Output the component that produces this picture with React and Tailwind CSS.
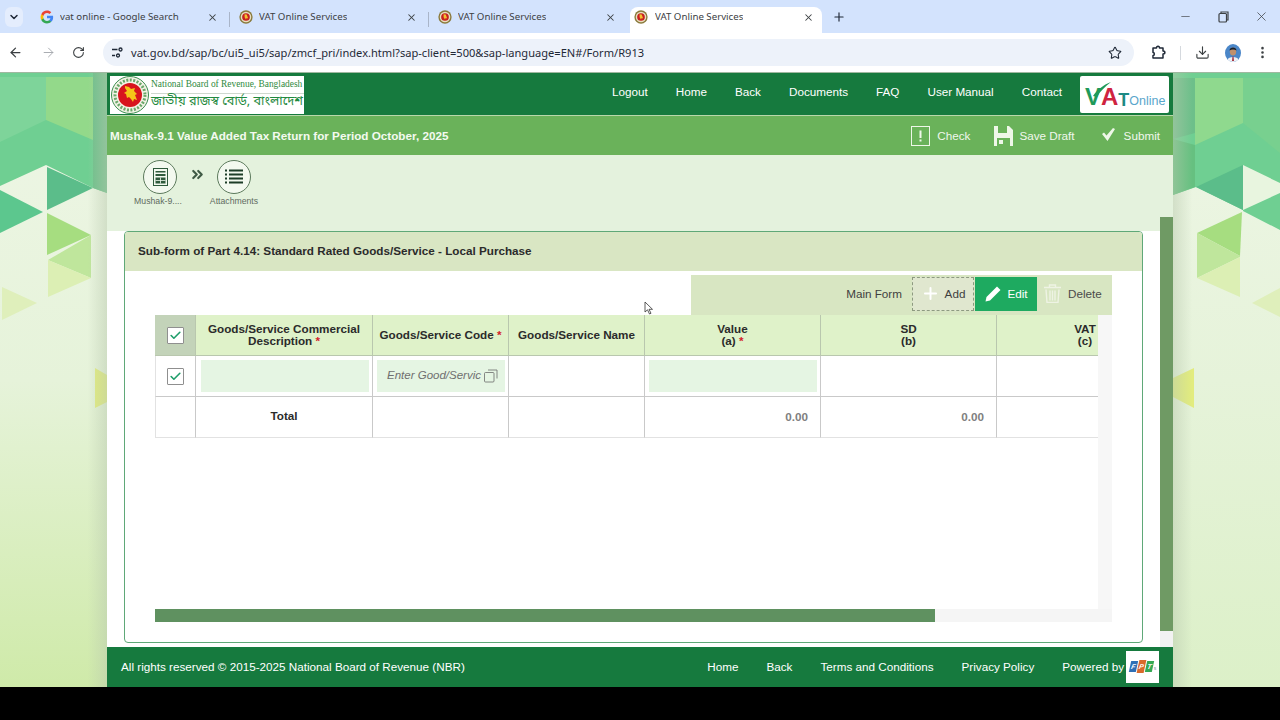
import { ArrowLeft, ArrowRight, RotateCw, Star, Download, MoreVertical, X, Plus, Minus, ChevronDown, ChevronsRight, Check } from 'lucide-react';

const sans = { fontFamily: '"Liberation Sans", Arial, sans-serif' };

function GoogleIcon() {
  return (
    <svg width="14" height="14" viewBox="0 0 48 48" className="shrink-0">
      <path fill="#4285F4" d="M45 24.5c0-1.6-.1-3.100-.4-4.500H24v8.600h11.800c-.5 2.700-2 5-4.400 6.600v5.500h7.100C42.700 36.800 45 31.200 45 24.500z" />
      <path fill="#34A853" d="M24 46c5.900 0 10.900-2 14.500-5.300l-7.100-5.500c-2 1.300-4.500 2.100-7.400 2.100-5.700 0-10.500-3.800-12.200-9H4.500v5.700C8.100 41.100 15.500 46 24 46z" />
      <path fill="#FBBC05" d="M11.800 28.300c-.9-2.700-.9-5.600 0-8.300v-5.700H4.500a22 22 0 0 0 0 19.700z" />
      <path fill="#EA4335" d="M24 10.700c3.200 0 6.100 1.100 8.400 3.300l6.300-6.300C34.900 4.100 29.900 2 24 2 15.500 2 8.100 6.900 4.500 14.300l7.300 5.700c1.700-5.200 6.500-9.300 12.200-9.300z" />
    </svg>
  );
}

function Favicon() {
  return (
    <svg width="14" height="14" viewBox="0 0 20 20" className="shrink-0">
      <circle cx="10" cy="10" r="9.500" fill="#8a7a3c" />
      <circle cx="10" cy="10" r="7.500" fill="#e8dfc0" />
      <circle cx="10" cy="10" r="5.500" fill="#c8201f" />
      <path d="M8 6l3 .5 1 2.500 1 3-2-.5-1 2-2-3z" fill="#f2c230" />
    </svg>
  );
}

function Tab({ icon, title, active, sep }) {
  return (
    <div className={`relative flex items-center h-[26px] ${active ? 'w-[192px] ml-[2px] bg-white rounded-t-lg' : 'w-[199px]'}`}>
      {sep && <div className="absolute left-[-1px] top-[5px] w-px h-[15px] bg-[#a9b5c9]" />}
      <div className={`flex items-center w-full ${active ? 'pl-[4px] pr-[8px]' : 'pl-[9px] pr-[12px]'} -mt-[5px]`}>
        {icon}
        <span className={`text-[9.7px] text-[#3c4043] truncate ${active ? 'ml-[7px]' : 'ml-[6px]'}`} style={{ fontFamily: '"Noto Sans", sans-serif' }}>{title}</span>
        <X size={11} strokeWidth={2.2} className="ml-auto text-[#3c4043]" />
      </div>
    </div>
  );
}

function ChromeBar() {
  return (
    <div className="shrink-0">
      <div className="h-[33px] bg-[#d3e3fd] flex items-end relative pl-[31px]">
        <div className="absolute left-[5px] top-[7px] w-[18px] h-[20px] rounded-md bg-[#e4edfd] flex items-center justify-center">
          <ChevronDown size={12} strokeWidth={3} className="text-[#1f2937]" />
        </div>
        <Tab icon={<GoogleIcon />} title="vat online - Google Search" />
        <Tab icon={<Favicon />} title="VAT Online Services" sep />
        <Tab icon={<Favicon />} title="VAT Online Services" sep />
        <Tab icon={<Favicon />} title="VAT Online Services" active />
        <Plus size={14} strokeWidth={2} className="text-[#1f2937] mb-[9px] ml-[10px]" />
        <div className="ml-auto flex items-center gap-[24px] mb-[9px] pr-[11px] text-[#3c4043]">
          <Minus size={13} strokeWidth={1.2} />
          <svg width="14" height="14" viewBox="0 0 14 14" fill="none" stroke="currentColor" strokeWidth="1.200"><rect x="3" y="3.500" width="7.500" height="8.500" rx="1" /><path d="M5 3.500V2h7v8h-1.500" /></svg>
          <X size={15} strokeWidth={1.2} />
        </div>
      </div>
      <div className="h-[39px] bg-white flex items-center relative text-[#3c4043]">
        <ArrowLeft size={15} strokeWidth={2} className="ml-[8px]" />
        <ArrowRight size={15} strokeWidth={1.500} className="ml-[18px] text-[#a4a8ad]" />
        <RotateCw size={13} strokeWidth={2} className="ml-[16px]" />
        <div className="ml-[18px] w-[1031px] h-[27px] rounded-full bg-[#edf2fa] flex items-center pl-[8px] pr-[12px]">
          <svg width="13" height="13" viewBox="0 0 13 13" fill="none" stroke="#1f2937" strokeWidth="1.300" className="shrink-0">
            <path d="M1 3.500h5.500M1 9.500h3" /><circle cx="9.500" cy="3.500" r="1.500" /><circle cx="7" cy="9.500" r="1.500" />
          </svg>
          <span className="ml-[7px] text-[11.1px] text-[#1f2937] whitespace-nowrap translate-y-px" style={{ fontFamily: '"Noto Sans", sans-serif' }}>vat.gov.bd/sap/bc/ui5_ui5/sap/zmcf_pri/index.html?sap-client=500&amp;sap-language=EN#/Form/R913</span>
          <Star size={14} strokeWidth={1.800} className="ml-auto text-[#1f2937]" />
        </div>
        <svg width="15" height="15" viewBox="0 0 15 15" fill="none" stroke="#1f2937" strokeWidth="1.500" strokeLinejoin="round" className="ml-[17px]">
          <path d="M2 3h3.500c0-2.500 3-2.500 3 0H12v3c2.500 0 2.500 3 0 3v4H2v-2.500c1.800 0 1.800-3 0-3z" />
        </svg>
        <div className="ml-[14px] w-px h-[14px] bg-[#d5d9de]" />
        <Download size={15} strokeWidth={1.800} className="ml-[14px]" />
        <svg width="16" height="18" viewBox="0 0 16 18" className="ml-[15px]">
          <ellipse cx="8" cy="9" rx="8" ry="9" fill="#4a86c8" />
          <ellipse cx="8" cy="7.500" rx="3.200" ry="4" fill="#c0906c" />
          <path d="M4.500 6.500c0-4 7-4 7 0-2-1.500-5-1.500-7 0z" fill="#15202e" />
          <path d="M2.500 15.500c1-3.500 10-3.500 11 0a8 9 0 0 1-11 0z" fill="#eef0f4" />
          <path d="M7.500 12.500h1l.5 4.500H7z" fill="#a22c3a" />
        </svg>
        <MoreVertical size={15} strokeWidth={2.200} className="ml-[14px]" />
      </div>
    </div>
  );
}

function SidePattern({ side }) {
  const left = side === 'left';
  return (
    <svg width="107" height="614" viewBox="0 0 107 614" className="shrink-0">
      <defs>
        <linearGradient id={`base-${side}`} x1="0" y1="0" x2="0" y2="1">
          <stop offset="0" stopColor="#eef6e6" />
          <stop offset="0.5" stopColor="#e6f3da" />
          <stop offset="1" stopColor={left ? '#cfeaa9' : '#dcf0c8'} />
        </linearGradient>
        <linearGradient id={`shade-${side}`} x1={left ? '1' : '0'} y1="0" x2={left ? '0' : '1'} y2="0">
          <stop offset="0" stopColor="#b9c9ae" stopOpacity="0.5" />
          <stop offset="0.18" stopColor="#b9c9ae" stopOpacity="0" />
        </linearGradient>
      </defs>
      <rect width="107" height="614" fill={`url(#base-${side})`} />
      {left ? (
        <g>
          <polygon points="0,0 107,0 107,120 93,115 46,92 0,113" fill="#6fcf92" />
          <polygon points="0,4 46,4 46,47 0,69" fill="#7ed49a" />
          <polygon points="46,4 93,4 93,67 46,47" fill="#93d98a" />
          <polygon points="93,0 107,0 107,120 93,115" fill="#6dbf8a" />
          <polygon points="47,94 93,115 47,137" fill="#5bbd8a" />
          <polygon points="0,117 43,139 0,160" fill="#5cc78e" />
          <polygon points="47,140 91,162 47,182" fill="#a6dd80" />
          <polygon points="48,187 91,162 91,205" fill="#bfe69c" />
          <polygon points="48,187 91,205 48,224" fill="#dcefb4" />
          <polygon points="2,214 37,230 2,247" fill="#dfefbb" />
          <polygon points="95,295 107,302 107,329 95,335" fill="#e2ec7e" />
        </g>
      ) : (
        <g>
          <polygon points="0,0 107,0 107,157 70,138 70,137 23,114 0,122" fill="#6fcf92" />
          <polygon points="0,5 22,5 22,60 0,66" fill="#6dbf8a" />
          <polygon points="22,5 70,5 70,50 22,72" fill="#8fd98e" />
          <polygon points="70,5 107,5 107,80 70,50" fill="#78d08f" />
          <polygon points="0,66 22,72 22,114 0,122" fill="#66c080" />
          <polygon points="23,114 70,92 70,137" fill="#5bbd8a" />
          <polygon points="70,92 107,110 107,120 70,137" fill="#e8f5df" />
          <polygon points="24,160 69,139 67,183" fill="#a6dd80" />
          <polygon points="24,160 67,183 67,184 24,205" fill="#bfe69c" />
          <polygon points="24,205 67,184 67,224" fill="#dcefb4" />
          <polygon points="79,230 107,215 107,244" fill="#dfefbb" />
          <polygon points="0,305 21,295 21,335 0,324" fill="#e2ec7e" />
        </g>
      )}
      <rect width="107" height="614" fill={`url(#shade-${side})`} />
    </svg>
  );
}

function Emblem() {
  return (
    <svg width="38" height="38" viewBox="0 0 38 38" className="shrink-0">
      <circle cx="19" cy="19" r="18.500" fill="#f3f3e6" stroke="#3c8f50" strokeWidth="1" />
      <circle cx="19" cy="19" r="15" fill="none" stroke="#6aa86a" strokeWidth="3" strokeDasharray="2 1.500" />
      <circle cx="19" cy="19" r="12" fill="#d8141e" />
      <path d="M14 10l4 1 2 2 4-1-1 3 3 3-2 1 2 5-3-1-1 3-2-3-2-2-2 1-1-4-2-1 3-2-2-3z" fill="#f5c518" />
    </svg>
  );
}

function LogoBox() {
  return (
    <div className="w-[194px] h-[38px] bg-white flex items-center pl-[1px] overflow-hidden">
      <Emblem />
      <div className="ml-[2px] w-[153px] flex flex-col leading-none">
        <div className="border-b border-[#cfd8cf] pb-[3px]">
          <span className="block text-[9.4px] text-[#2f8a3e] whitespace-nowrap scale-y-[1.2] origin-bottom" style={{ fontFamily: '"Liberation Serif", serif' }}>National Board of Revenue, Bangladesh</span>
        </div>
        <span className="text-[12.7px] leading-[16px] text-[#1f8a3e] whitespace-nowrap" style={{ fontFamily: '"Noto Sans Bengali", "Noto Sans", sans-serif' }}>জাতীয় রাজস্ব বোর্ড, বাংলাদেশ</span>
      </div>
    </div>
  );
}

function VatLogo() {
  return (
    <div className="relative w-[89px] h-[37px] bg-white rounded-[2px] flex items-end pb-[4px] pl-[5px] whitespace-nowrap" style={sans}>
      <span className="text-[24px] font-bold text-[#1f9a5a] leading-none">V</span>
      <span className="text-[24px] font-bold text-[#cf2340] leading-none">A</span>
      <span className="text-[18px] font-bold text-[#1c8a84] leading-none">T</span>
      <span className="text-[12.5px] text-[#5aa6cc] leading-none mb-[2px]">Online</span>
      <svg width="20" height="16" viewBox="0 0 20 16" className="absolute left-[12px] top-[5px]">
        <path d="M1 15C5 9 11 4 19 1 13 6 8 10 5 16z" fill="#1f9a5a" />
      </svg>
    </div>
  );
}

function TopNav() {
  const links = ['Logout', 'Home', 'Back', 'Documents', 'FAQ', 'User Manual', 'Contact'];
  return (
    <div className="h-[43px] bg-[#167a3e] flex items-start pt-[3px] pl-[3px] pr-[4px] border-b border-[#b9d8ab] shrink-0">
      <LogoBox />
      <div className="ml-auto flex items-center gap-[28px] pr-[18px] h-[31px] text-[11.7px] text-white">
        {links.map((l) => <span key={l}>{l}</span>)}
      </div>
      <VatLogo />
    </div>
  );
}

function ActionBar() {
  return (
    <div className="h-[39px] bg-[#6ab25a] flex items-center pl-[3px] shrink-0 text-white">
      <span className="text-[11.7px] font-bold text-[#f4faf0]">Mushak-9.1 Value Added Tax Return for Period October, 2025</span>
      <div className="ml-auto flex items-center pr-[13px] text-[11.7px] text-[#f0f7ec]">
        <svg width="19" height="20" viewBox="0 0 19 20" fill="none"><rect x="0.500" y="0.500" width="18" height="19" stroke="#eef7e8" /><rect x="8.500" y="4.500" width="2" height="7.500" fill="#eef7e8" /><rect x="8.500" y="13.500" width="2" height="2" fill="#eef7e8" /></svg>
        <span className="ml-[7px]">Check</span>
        <svg width="19" height="20" viewBox="0 0 19 20" className="ml-[24px]"><path d="M0 0h15l4 4v16H0z" fill="#eef7e8" /><rect x="4" y="0" width="9" height="7" fill="#6ab25a" /><rect x="3" y="12" width="13" height="8" fill="#6ab25a" /><rect x="5" y="14" width="4" height="4" fill="#eef7e8" /></svg>
        <span className="ml-[6px]">Save Draft</span>
        <svg width="13" height="13" viewBox="0 0 13 13" fill="#eef7e8" className="ml-[27px] -mt-[3px]"><path d="M0 6l2-1.500 2.500 3L11 0l2 1-7.500 12z" /></svg>
        <span className="ml-[9px]">Submit</span>
      </div>
    </div>
  );
}

function StepCircle({ children, label, labelClass = '' }) {
  return (
    <div className="flex flex-col items-center w-[50px]">
      <div className="w-[34px] h-[34px] rounded-full bg-[#f3f9ef] border border-[#5c7a5c] flex items-center justify-center">{children}</div>
      <span className={`mt-[3px] text-[8.7px] text-[#5f6b5f] whitespace-nowrap leading-none ${labelClass}`}>{label}</span>
    </div>
  );
}

function Steps() {
  return (
    <div className="h-[76px] bg-[#e4f2dd] flex items-start pt-[5px] pl-[28px] shrink-0">
      <StepCircle label="Mushak-9...." labelClass="-translate-x-[2px]">
        <svg width="15" height="18" viewBox="0 0 15 18"><rect x="0.500" y="0.500" width="14" height="17" fill="none" stroke="#2f5a3c" /><rect x="2.500" y="3" width="10" height="1.500" fill="#2f5a3c" /><rect x="2.500" y="6" width="10" height="2" fill="#2f5a3c" /><rect x="2.500" y="9.500" width="10" height="6" fill="#2f5a3c" /><path d="M2.500 12.500h10M7.500 9.500v6" stroke="#f3f9ef" strokeWidth="0.800" /></svg>
      </StepCircle>
      <ChevronsRight size={17} strokeWidth={3} className="text-[#3f5a45] mt-[6px] ml-[4px] mr-[3px]" />
      <StepCircle label="Attachments">
        <svg width="18" height="18" viewBox="0 0 18 18" fill="#1d3d28"><path d="M0 1.500h2v2H0zM0 5.500h2v2H0zM0 9.500h2v2H0zM0 13.500h2v2H0zM4 1.500h14v2H4zM4 5.500h14v2H4zM4 9.500h14v2H4zM4 13.500h14v2H4z" /></svg>
      </StepCircle>
    </div>
  );
}

function Req() {
  return <span className="text-[#d4242c]"> *</span>;
}

function Head({ children, className = '' }) {
  return (
    <div className={`bg-[#dff2c9] border-r border-[#b9c7ae] border-b flex items-center justify-center text-center text-[11.7px] leading-[12px] font-bold text-[#2b2b2b] ${className}`}>
      <div>{children}</div>
    </div>
  );
}

function Cell({ children, className = '' }) {
  return <div className={`border-r border-b border-[#c9c9c9] flex items-center ${className}`}>{children}</div>;
}

function CheckBox() {
  return (
    <div className="w-[17px] h-[17px] bg-white border border-[#8f8f8f] rounded-[1px] flex items-center justify-center">
      <Check size={13} strokeWidth={3} className="text-[#1e9e6a]" />
    </div>
  );
}

function CopyIcon() {
  return (
    <svg width="14" height="14" viewBox="0 0 14 14" fill="none" stroke="#6b6b6b" strokeWidth="0.800" className="shrink-0 ml-auto">
      <rect x="0.500" y="3.500" width="9.500" height="9.500" rx="1" /><path d="M4 1h9v8.500" />
    </svg>
  );
}

function FormTable() {
  return (
    <div className="w-[943px] overflow-hidden">
      <div className="grid w-[1018px] grid-cols-[41px_177px_136px_136px_176px_176px_176px] grid-rows-[41px_41px_41px]">
        <div className="bg-[#c3d3b9] border-b border-r border-[#b9c7ae] flex items-center justify-center"><CheckBox /></div>
        <Head>Goods/Service Commercial<br />Description<Req /></Head>
        <Head>Goods/Service Code<Req /></Head>
        <Head>Goods/Service Name</Head>
        <Head>Value<br />(a)<Req /></Head>
        <Head>SD<br />(b)</Head>
        <Head className="border-r-0">VAT<br />(c)</Head>

        <Cell className="justify-center border-l border-l-[#e2e2e2]"><CheckBox /></Cell>
        <Cell className="pl-[5px] pr-[3px]"><div className="w-full h-[32px] bg-[#e5f5e3]" /></Cell>
        <Cell className="pl-[4px] pr-[3px]">
          <div className="w-full h-[32px] bg-[#e5f5e3] flex items-center pl-[10px] pr-[7px]">
            <span className="text-[11.5px] italic text-[#6f6f6f] whitespace-nowrap" style={sans}>Enter Good/Servic</span>
            <CopyIcon />
          </div>
        </Cell>
        <Cell />
        <Cell className="pl-[4px] pr-[3px]"><div className="w-full h-[32px] bg-[#e5f5e3]" /></Cell>
        <Cell />
        <Cell className="border-r-0" />

        <Cell className="border-l border-l-[#e2e2e2] border-b-[#e2e2e2]" />
        <Cell className="justify-center text-[11.7px] font-bold text-[#2b2b2b] pb-[2px] border-b-[#e2e2e2]">Total</Cell>
        <Cell className="border-b-[#e2e2e2]" />
        <Cell className="border-b-[#e2e2e2]" />
        <Cell className="justify-end pr-[12px] text-[11.7px] font-bold text-[#808080] border-b-[#e2e2e2]">0.00</Cell>
        <Cell className="justify-end pr-[12px] text-[11.7px] font-bold text-[#808080] border-b-[#e2e2e2]">0.00</Cell>
        <Cell className="border-r-0 border-b-[#e2e2e2]" />
      </div>
    </div>
  );
}

function FormToolbar() {
  return (
    <div className="flex justify-end">
      <div className="w-[421px] h-[40px] bg-[#d8e6c2] flex items-center justify-end pb-[3px] text-[11.7px] text-[#3f3f3f]">
        <span>Main Form</span>
        <div className="ml-[10px] w-[62px] h-[34px] bg-[#e0e7cf] border border-dashed border-[#8d9a80] flex items-center justify-center gap-[5px]">
          <Plus size={19} strokeWidth={2.500} className="text-white" />
          <span>Add</span>
        </div>
        <div className="ml-px w-[62px] h-[34px] bg-[#1eaa60] flex items-center justify-center gap-[5px] text-white">
          <svg width="18" height="18" viewBox="0 0 18 18" fill="#fff"><path d="M13 1.500l3.500 3.500L6 15.500l-4.500 1 1-4.500z" /></svg>
          <span>Edit</span>
        </div>
        <div className="w-[75px] h-[34px] flex items-center pl-[7px] gap-[7px] text-[#4a4a4a]">
          <svg width="17" height="19" viewBox="0 0 17 19" fill="none" stroke="#eef3e4" strokeWidth="1.400"><path d="M0 3.500h17M5.500 3V1h6v2M2 5.500l1 13h11l1-13M6 6.500v10M8.500 6.500v10M11 6.500v10" /></svg>
          <span>Delete</span>
        </div>
      </div>
    </div>
  );
}

function FormCard() {
  return (
    <div className="ml-[17px] mr-[30px] h-[412px] rounded-[4px] border border-[#5fa878] flex flex-col overflow-hidden">
      <div className="h-[39px] bg-[#d9e6c3] flex items-center pl-[13px] pb-[2px] text-[11.7px] font-bold text-[#2b2b2b] shrink-0">
        Sub-form of Part 4.14: Standard Rated Goods/Service - Local Purchase
      </div>
      <div className="flex-1 pl-[30px] pr-[30px] pt-[4px]">
        <FormToolbar />
        <div className="bg-[#f7f7f7] h-[294px]">
          <div className="bg-white h-full w-[943px]"><FormTable /></div>
        </div>
        <div className="h-[13px] bg-[#f5f5f5]">
          <div className="w-[780px] h-full bg-[#5f9160]" />
        </div>
      </div>
    </div>
  );
}

function Footer() {
  return (
    <div className="h-[40px] bg-[#167a3e] flex items-center pl-[14px] pr-[14px] pb-[1px] text-[11.7px] text-white shrink-0">
      <span>All rights reserved © 2015-2025 National Board of Revenue (NBR)</span>
      <div className="ml-auto flex items-center gap-[28px]">
        <span>Home</span>
        <span>Back</span>
        <span>Terms and Conditions</span>
        <span>Privacy Policy</span>
        <div className="flex items-center gap-[2px]">
          <span>Powered by</span>
          <div className="w-[33px] h-[32px] bg-white flex items-center justify-center gap-[1px] pl-[1px]">
            <span className="w-[7px] h-[11px] bg-[#2f6fb5] -skew-x-12 text-[7px] leading-[11px] text-center font-bold italic text-white">F</span>
            <span className="w-[7px] h-[13px] bg-[#d96a2c] -skew-x-12 text-[7px] leading-[13px] text-center font-bold italic text-white">P</span>
            <span className="w-[7px] h-[11px] bg-[#35a853] -skew-x-12 text-[7px] leading-[11px] text-center font-bold italic text-white">T</span>
            <span className="text-[5px] leading-none text-[#7a8a9a] mt-[3px]">s</span>
          </div>
        </div>
      </div>
    </div>
  );
}

export default function App() {
  return (
    <div className="w-[1280px] h-[720px] bg-black overflow-hidden flex flex-col" style={sans}>
      <ChromeBar />
      <div className="h-px bg-[#9fb8a0] shrink-0" />
      <div className="flex h-[614px] shrink-0">
        <SidePattern side="left" />
        <div className="relative w-[1066px] shrink-0 flex flex-col bg-white">
          <TopNav />
          <ActionBar />
          <Steps />
          <FormCard />
          <div className="flex-1" />
          <Footer />
          <div className="absolute right-0 top-[144px] w-[13px] h-[414px] bg-[#6f9a64]" />
          <div className="absolute right-0 top-[558px] w-[13px] h-[16px] bg-[#f2f2f2]" />
          <svg width="10" height="14" viewBox="0 0 10 14" className="absolute left-[537px] top-[228px]">
            <path d="M1 1v10l2.500-2.200L5.500 13l1.500-.7-2-4h3.500z" fill="#fff" stroke="#333" strokeWidth="0.800" />
          </svg>
        </div>
        <SidePattern side="right" />
      </div>
    </div>
  );
}
